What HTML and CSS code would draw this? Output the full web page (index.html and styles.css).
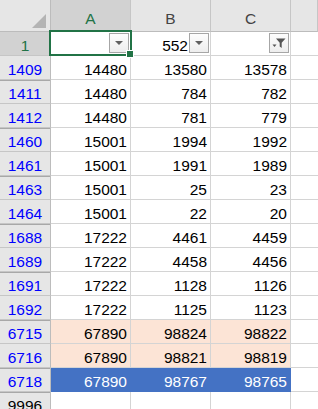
FILE: index.html
```html
<!DOCTYPE html>
<html lang="en">
<head>
  <meta charset="UTF-8" />
  <title>Sheet</title>
  <link rel="stylesheet" href="styles.css">
</head>
<body>
  <div class="sheet">
    <div class="corner"></div>
    <div class="colhead active">A</div>
    <div class="colhead">B</div>
    <div class="colhead">C</div>
    <div class="colhead"></div>

    <div class="rowhead active">1</div>
    <div class="cell selected">
      <span class="filter"><span class="arrow"></span></span>
    </div>
    <div class="cell">552<span class="filter"><span class="arrow"></span></span></div>
    <div class="cell"><span class="filter on"><svg width="14" height="12" viewBox="0 0 14 12"><path d="M4 1.5h9.5l-3.8 4.2v5.3l-2 -1.4v-3.9z" fill="#555"/><path d="M0.5 7.5h4l-2 2.5z" fill="#555"/></svg></span></div>
    <div class="cell blank"></div>

    <div class="rowhead">1409</div><div class="cell">14480</div><div class="cell">13580</div><div class="cell">13578</div><div class="cell blank"></div>
    <div class="rowhead gap">1411</div><div class="cell">14480</div><div class="cell">784</div><div class="cell">782</div><div class="cell blank"></div>
    <div class="rowhead">1412</div><div class="cell">14480</div><div class="cell">781</div><div class="cell">779</div><div class="cell blank"></div>
    <div class="rowhead gap">1460</div><div class="cell">15001</div><div class="cell">1994</div><div class="cell">1992</div><div class="cell blank"></div>
    <div class="rowhead">1461</div><div class="cell">15001</div><div class="cell">1991</div><div class="cell">1989</div><div class="cell blank"></div>
    <div class="rowhead gap">1463</div><div class="cell">15001</div><div class="cell">25</div><div class="cell">23</div><div class="cell blank"></div>
    <div class="rowhead">1464</div><div class="cell">15001</div><div class="cell">22</div><div class="cell">20</div><div class="cell blank"></div>
    <div class="rowhead gap">1688</div><div class="cell">17222</div><div class="cell">4461</div><div class="cell">4459</div><div class="cell blank"></div>
    <div class="rowhead">1689</div><div class="cell">17222</div><div class="cell">4458</div><div class="cell">4456</div><div class="cell blank"></div>
    <div class="rowhead gap">1691</div><div class="cell">17222</div><div class="cell">1128</div><div class="cell">1126</div><div class="cell blank"></div>
    <div class="rowhead">1692</div><div class="cell">17222</div><div class="cell">1125</div><div class="cell">1123</div><div class="cell blank"></div>
    <div class="rowhead gap">6715</div><div class="cell peach">67890</div><div class="cell peach">98824</div><div class="cell peach">98822</div><div class="cell blank"></div>
    <div class="rowhead">6716</div><div class="cell peach">67890</div><div class="cell peach">98821</div><div class="cell peach">98819</div><div class="cell blank"></div>
    <div class="rowhead gap">6718</div><div class="cell blue">67890</div><div class="cell blue">98767</div><div class="cell blue">98765</div><div class="cell blank"></div>
    <div class="rowhead gap plain">9996</div><div class="cell"></div><div class="cell"></div><div class="cell"></div><div class="cell blank"></div>
  </div>
</body>
</html>
```
FILE: styles.css
```css
* { box-sizing: border-box; }
body { margin: 0; background: #fff; font-family: "Liberation Sans", Arial, sans-serif; font-size: 15.5px; color: #000; }
.sheet {
  display: grid;
  grid-template-columns: 51px 80px 80px 80px 1fr;
  grid-template-rows: 32px repeat(16, 24px);
  width: 318px;
}
.corner {
  background: #e6e6e6;
  border-right: 1px solid #bcbcbc;
  border-bottom: 1px solid #bcbcbc;
  position: relative;
}
.corner::after {
  content: "";
  position: absolute;
  right: 4px;
  bottom: 3px;
  border-left: 14px solid transparent;
  border-bottom: 14px solid #b4b4b4;
}
.colhead {
  background: #e6e6e6;
  border-right: 1px solid #c6c6c6;
  border-bottom: 1px solid #bcbcbc;
  color: #444;
  display: flex;
  align-items: flex-end;
  justify-content: center;
  padding-bottom: 5px;
  line-height: 1;
}
.colhead.active { background: #d2d2d2; color: #217346; border-bottom: 1px solid #a0a0a0; }
.rowhead {
  background: #e6e6e6;
  border-right: 1px solid #bcbcbc;
  border-bottom: 1px solid #c6c6c6;
  color: #0000ff;
  display: flex;
  align-items: flex-end;
  justify-content: center;
  padding-bottom: 2px;
  line-height: 1;
}
.rowhead.gap { box-shadow: inset 0 1px 0 #a8a8a8; }
.rowhead.plain { color: #000; }
.rowhead.active { background: #d2d2d2; color: #217346; border-right-color: #a0a0a0; }
.cell {
  border-right: 1px solid #d4d4d4;
  border-bottom: 1px solid #d4d4d4;
  display: flex;
  align-items: flex-end;
  justify-content: flex-end;
  padding: 0 3px 2px 0;
  line-height: 1;
  position: relative;
}
.cell.blank { border-right: none; }
.cell.peach { background: #fce4d6; }
.cell.blue { background: #4472c4; color: #fff; border-color: #4472c4; }
.selected::after {
  content: "";
  position: absolute;
  left: -2px;
  top: -2px;
  right: -2px;
  bottom: -1px;
  border: 2px solid #217346;
}
.selected::before {
  content: "";
  position: absolute;
  right: -4px;
  bottom: -3px;
  width: 6px;
  height: 6px;
  background: #217346;
  border: 1px solid #fff;
  z-index: 2;
}
.filter {
  width: 20px;
  height: 20px;
  align-self: center;
  margin-left: 1px;
  margin-right: -2px;
  border: 1px solid #a6a6a6;
  background: linear-gradient(#fdfdfd, #ededed);
  display: flex;
  align-items: center;
  justify-content: center;
}
.arrow {
  border-left: 4px solid transparent;
  border-right: 4px solid transparent;
  border-top: 4px solid #606060;
  margin-top: 1px;
}
```
